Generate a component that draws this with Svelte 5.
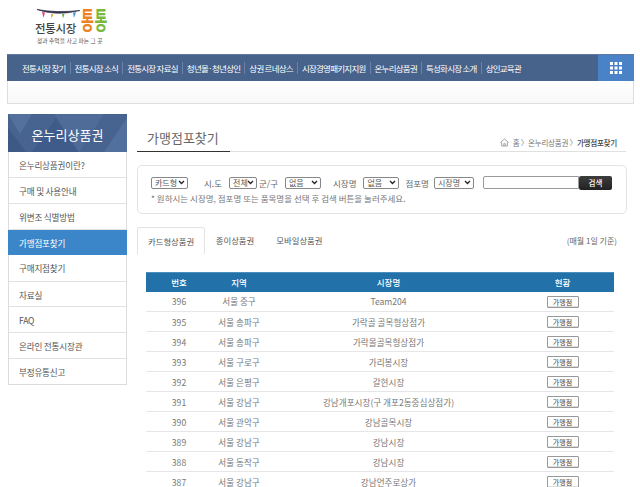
<script>
  const navItems = ['전통시장 찾기','전통시장 소식','전통시장 자료실','청년몰·청년상인','상권 르네상스','시장경영패키지지원','온누리상품권','특성화시장 소개','상인교육관'];
  const side = ['온누리상품권이란?','구매 및 사용안내','위변조 식별방법','가맹점포찾기','구매지점찾기','자료실','FAQ','온라인 전통시장관','부정유통신고'];
  const rows = [
    [396,'서울 중구','Team204'],
    [395,'서울 송파구','가락골 골목형상점가'],
    [394,'서울 송파구','가락몰골목형상점가'],
    [393,'서울 구로구','가리봉시장'],
    [392,'서울 은평구','갈현시장'],
    [391,'서울 강남구','강남개포시장(구 개포2동중심상점가)'],
    [390,'서울 관악구','강남골목시장'],
    [389,'서울 강남구','강남시장'],
    [388,'서울 동작구','강남시장'],
    [387,'서울 강남구','강남언주로상가']
  ];
</script>

<div class="page">
  <header class="top">
    <div class="logo">
      <div class="logo-main">
        <div class="logo-left">
          <svg class="garland" viewBox="0 0 46 14" width="46" height="14" aria-hidden="true">
            <path d="M1 0.5 Q 20 7.5 44 1.5 Q 20 4 1 0.5Z" fill="#37324e" stroke="#37324e" stroke-width="0.7"/>
            <path d="M6 3 L9 3.6 L7.5 9 Z" fill="#e0467f"/>
            <path d="M15 5 L17.5 5.2 L15.5 9.5 Z" fill="#e9a72c"/>
            <path d="M26 5 L28.5 5 L27 9.5 Z" fill="#6fa93a"/>
            <path d="M37 3.6 L40 3.2 L38 9 Z" fill="#4a94d0"/>
          </svg>
          <span class="logo-a">전통시장</span>
        </div>
        <div class="logo-b"><span class="t1">통</span><span class="t2">통</span></div>
      </div>
      <div class="logo-sub">정과 추억을 사고 파는 그 곳</div>
    </div>
  </header>

  <nav class="nav">
    <ul>
      {#each navItems as item}
        <li>{item}</li>
      {/each}
    </ul>
    <div class="grid-btn">
      <svg viewBox="0 0 12 12" width="12" height="12" aria-hidden="true">
        {#each [0,1,2] as y}
          {#each [0,1,2] as x}
            <rect x={x*4.5} y={y*4.5} width="3" height="3" fill="#fff"/>
          {/each}
        {/each}
      </svg>
    </div>
  </nav>
  <div class="subbar"></div>

  <div class="body">
    <aside class="side">
      <h2>
        <svg class="tri" viewBox="0 0 119 38" preserveAspectRatio="none" aria-hidden="true">
          <polygon points="0,0 24,0 12,20" fill="#54709c"/>
          <polygon points="46,0 96,0 71,38" fill="#4f6b98"/>
          <polygon points="0,38 0,14 18,38" fill="#3e5986"/>
          <polygon points="96,38 119,4 119,38" fill="#52709e"/>
          <polygon points="24,38 48,4 70,38" fill="#3f5b89"/>
        </svg>
        <span>온누리상품권</span>
      </h2>
      <ul>
        {#each side as s, i}
          <li class:active={i===3}>{s}</li>
        {/each}
      </ul>
    </aside>

    <main class="main">
      <div class="title-row">
        <h1>가맹점포찾기</h1>
        <div class="crumb">
          <svg viewBox="0 0 12 11" width="9" height="9" aria-hidden="true">
            <path d="M0.5 5.5 L6 0.8 L11.5 5.5 M2.2 5 V10.2 H9.8 V5 M5 10 V7 H7 V10" fill="none" stroke="#8a8a8a" stroke-width="1"/>
          </svg>
          <span>홈 〉온누리상품권 〉</span><b>가맹점포찾기</b>
        </div>
      </div>

      <section class="search">
        <div class="line">
          <select class="s1"><option>카드형</option></select>
          <label class="l-sido">시.도</label>
          <select class="s2"><option>전체</option></select>
          <label class="l-gun">군/구</label>
          <select class="s3"><option>없음</option></select>
          <label class="l-market">시장명</label>
          <select class="s3"><option>없음</option></select>
          <label class="l-store">점포명</label>
          <select class="s4"><option>시장명</option></select>
          <input class="q" type="text" />
          <button class="go">검색</button>
        </div>
        <p>* 원하시는 시장명, 점포명 또는 품목명을 선택 후 검색 버튼을 눌러주세요.</p>
      </section>

      <div class="tabs">
        <div class="tab on">카드형상품권</div>
        <div class="tab">종이상품권</div>
        <div class="tab">모바일상품권</div>
        <div class="note">(매월 1일 기준)</div>
      </div>

      <table>
        <thead>
          <tr><th class="c1">번호</th><th class="c2">지역</th><th>시장명</th><th class="c4">현황</th></tr>
        </thead>
        <tbody>
          {#each rows as r}
            <tr>
              <td>{r[0]}</td><td>{r[1]}</td><td>{r[2]}</td>
              <td><button class="mini">가맹점</button></td>
            </tr>
          {/each}
        </tbody>
      </table>
    </main>
  </div>
</div>

<style>
  :global(body) {
    margin: 0;
    background: #fff;
    overflow: hidden;
    font-family: "Noto Sans CJK KR", "Noto Sans", sans-serif;
    color: #555;
  }
  .page { width: 640px; height: 487px; overflow: hidden; font-size: 8px; }
  ul { list-style: none; margin: 0; padding: 0; }

  .top { height: 54px; padding: 9px 0 0 35px; box-sizing: border-box; }
  .logo { width: 76px; display: flex; flex-direction: column; }
  .logo-main { display: flex; height: 25px; }
  .logo-left { width: 46px; display: flex; flex-direction: column; justify-content: space-between; }
  .garland { display: block; margin-left: 1px; }
  .logo-a { font-size: 11.5px; font-weight: 500; color: #444; line-height: 11px; white-space: nowrap; letter-spacing: -0.35px; }
  .logo-b { display: flex; font-weight: 700; font-size: 14px; line-height: 15px; height: 25px; margin-top: -2px; }
  .logo-b span { display: block; width: 13.5px; transform: scaleY(1.7); transform-origin: 0 0; }
  .t1 { color: #ee8122; }
  .t2 { color: #79b83a; }
  .logo-sub { font-size: 5.7px; line-height: 7px; color: #555; margin: 3px 0 0 2px; white-space: nowrap; letter-spacing: 0.1px; }

  .nav { margin-left: 7px; width: 627px; height: 27px; background: #47628b; border-top: 1px solid #5e7aa3; box-sizing: border-box; display: flex; justify-content: space-between; }
  .nav ul { display: flex; align-items: center; padding-left: 11px; }
  .nav li { color: #fff; font-size: 8.5px; padding: 0 4px; line-height: 12px; border-right: 1px solid #6b83a8; letter-spacing: -0.75px; white-space: nowrap; }
  .nav li:last-child { border-right: none; }
  .grid-btn { width: 36px; background: #4a82c8; display: flex; align-items: center; justify-content: center; }

  .subbar { margin-left: 7px; width: 627px; height: 23px; box-sizing: border-box; border: 1px solid #dedede; border-top: none; background: linear-gradient(#fff, #f8f8f8); }

  .body { display: flex; margin-left: 8px; margin-top: 10px; gap: 10px; }

  .side { width: 119px; flex: none; }
  .side h2 { margin: 0; height: 38px; position: relative; overflow: hidden; background: #47638f; color: #fff; font-size: 13px; font-weight: 400; line-height: 41px; text-align: center; }
  .tri { position: absolute; left: 0; top: 0; width: 100%; height: 100%; }
  .side h2 span { position: relative; }
  .side ul { border: 1px solid #dcdcdc; border-top: none; }
  .side li { height: 26px; box-sizing: border-box; line-height: 26px; border-bottom: 1px solid #e2e2e2; padding-left: 10px; font-size: 8.6px; letter-spacing: -0.2px; color: #555; }
  .side li:nth-child(5) { height: 27px; }
  .side li:nth-child(6) { height: 25px; }
  .side li:last-child { border-bottom: none; height: 25px; }
  .side li.active { background: #3b86c8; color: #fff; margin: 0 -1px; padding-left: 11px; border-bottom: none; height: 25px; }

  .main { width: 490px; flex: none; }
  .title-row { height: 28px; border-bottom: 1px solid #e0e0e0; display: flex; justify-content: space-between; align-items: flex-end; box-sizing: border-box; margin-top: 10px; width: 489px; }
  .title-row h1 { margin: 0; width: 93px; height: 28px; box-sizing: border-box; border-bottom: 1px solid #333; margin-bottom: -1px; padding-left: 10px; font-size: 13px; font-weight: 400; line-height: 28px; color: #666; letter-spacing: 0; }
  .crumb { display: flex; align-items: center; gap: 4px; font-size: 7.6px; color: #777; height: 17px; padding-right: 9px; letter-spacing: -0.3px; white-space: nowrap; }
  .crumb b { font-weight: 500; color: #444; margin-left: -4px; }

  .search { margin-top: 13px; height: 49px; width: 490px; box-sizing: border-box; border: 1px solid #e3e3e3; border-radius: 5px; padding: 10px 0 0 13px; }
  .line { display: flex; align-items: center; height: 13px; font-size: 8.5px; color: #666; }
  select {
    appearance: none; -webkit-appearance: none;
    height: 12px; font-size: 8px; line-height: 10px; font-family: inherit; color: #555;
    background: #fff url("data:image/svg+xml,%3Csvg xmlns='http://www.w3.org/2000/svg' width='7' height='5'%3E%3Cpath d='M1 1l2.5 2.5L6 1' fill='none' stroke='%23222' stroke-width='1.3'/%3E%3C/svg%3E") no-repeat right 2px center;
    border: 1px solid #888; border-radius: 2px; padding: 0 0 0 3px; margin: 0; box-sizing: border-box;
  }
  .s1 { width: 37px; }
  .s2 { width: 28px; }
  .s3 { width: 36px; }
  .s4 { width: 40px; }
  .l-sido { margin: 0 7px 0 16px; }
  .l-gun { margin: 0 7px 0 2px; }
  .l-market { margin: 0 7px 0 12px; }
  .l-store { margin: 0 5px 0 6px; }
  .q { width: 96px; height: 13px; box-sizing: border-box; margin: 0 0 0 9px; border: 1px solid #999; border-radius: 2px 0 0 2px; padding: 0; }
  .go { width: 33px; height: 14px; padding: 0; margin: 0; border: none; border-radius: 2px; background: linear-gradient(#3d3d3d, #222); color: #fff; font-size: 7.5px; font-family: inherit; font-weight: 500; }
  .search p { margin: 3px 0 0 0; font-size: 8.5px; line-height: 12px; color: #777; white-space: nowrap; }

  .tabs { display: flex; align-items: stretch; height: 27px; margin-top: 13px; }
  .tab { padding: 0 11px; line-height: 26px; font-size: 8.4px; color: #555; }
  .tab.on { border: 1px solid #e3e3e3; border-bottom: none; border-radius: 3px 3px 0 0; padding: 0 9.5px 0 10px; }
  .note { margin-left: auto; align-self: center; padding-right: 10px; font-size: 8px; color: #666; }

  table { margin: 18px 0 0 9px; width: 468px; border-collapse: collapse; table-layout: fixed; font-size: 8.6px; color: #777; }
  th { height: 19px; background: #2272a9; color: #fff; font-weight: 500; font-size: 8.5px; padding: 0; border-top: 1px solid #4a8fbd; box-sizing: border-box; }
  .c1 { width: 66px; }
  .c2 { width: 54px; }
  .c4 { width: 103px; }
  td { height: 20px; padding: 0; text-align: center; border-bottom: 1px solid #e6e6e6; box-sizing: border-box; white-space: nowrap; }
  .mini { width: 32px; height: 12px; padding: 0; font-size: 7px; font-family: inherit; color: #444; background: #fff; border: 1px solid #999; border-radius: 1px; box-shadow: inset 0 -1px 0 #ddd; display: block; margin: 1px auto 0; line-height: 10px; }
</style>
